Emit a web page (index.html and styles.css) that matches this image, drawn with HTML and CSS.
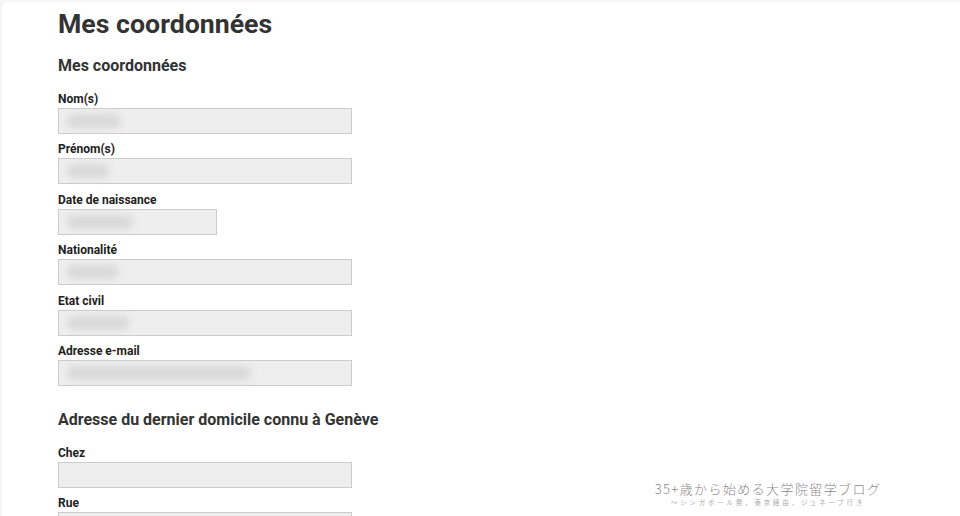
FILE: index.html
```html
<!DOCTYPE html>
<html lang="fr">
<head>
<meta charset="utf-8">
<title>Mes coordonnées</title>
<link rel="stylesheet" href="styles.css">
</head>
<body>
<main class="card">
  <h1 class="title">Mes coordonnées</h1>
  <section class="section">
    <h2 class="section-title">Mes coordonnées</h2>
    <div class="field">
      <label class="label">Nom(s)</label>
      <div class="input"><span class="blur" style="width:54px"></span></div>
    </div>
    <div class="field">
      <label class="label">Prénom(s)</label>
      <div class="input"><span class="blur" style="width:42px"></span></div>
    </div>
    <div class="field">
      <label class="label">Date de naissance</label>
      <div class="input input-short"><span class="blur" style="width:66px"></span></div>
    </div>
    <div class="field">
      <label class="label">Nationalité</label>
      <div class="input"><span class="blur" style="width:52px"></span></div>
    </div>
    <div class="field">
      <label class="label">Etat civil</label>
      <div class="input"><span class="blur" style="width:62px"></span></div>
    </div>
    <div class="field">
      <label class="label">Adresse e-mail</label>
      <div class="input"><span class="blur" style="width:184px"></span></div>
    </div>
  </section>
  <section class="section">
    <h2 class="section-title section-title-2">Adresse du dernier domicile connu à Genève</h2>
    <div class="field">
      <label class="label">Chez</label>
      <div class="input"></div>
    </div>
    <div class="field">
      <label class="label">Rue</label>
      <div class="input"></div>
    </div>
  </section>
</main>
<div class="watermark">
  <div class="wm-title">35+歳から始める大学院留学ブログ</div>
  <div class="wm-sub">〜シンガポール発、東京経由、ジュネーブ行き</div>
</div>
</body>
</html>
```
FILE: styles.css
```css
html, body {
  margin: 0;
  padding: 0;
  height: 100%;
  overflow: hidden;
}
body {
  background: #f6f6f6;
  font-family: Roboto, "Liberation Sans", Arial, sans-serif;
  color: #333;
}
.card {
  background: #fff;
  margin: 2px 0 0 2px;
  border-top-left-radius: 6px;
  padding: 5px 0 0 56px;
  min-height: 600px;
}
.title {
  margin: 0;
  font-size: 26.7px;
  line-height: 34px;
  font-weight: 700;
  color: #333;
}
.section-title {
  margin: 15px 0 0;
  font-size: 16px;
  line-height: 20px;
  font-weight: 700;
  color: #333;
}
.section-title-2 {
  margin-top: 23.6px;
}
.field {
  display: flex;
  flex-direction: column;
}
.section-title + .field {
  margin-top: 16px;
}
.field + .field {
  margin-top: 8.4px;
}
.label {
  font-size: 12px;
  line-height: 15px;
  font-weight: 700;
  color: #222;
  margin-bottom: 1px;
}
.input {
  box-sizing: border-box;
  width: 294px;
  height: 26px;
  background: #eeeeee;
  border: 1px solid #cccccc;
  display: flex;
  align-items: center;
  padding-left: 8px;
}
.input-short {
  width: 159px;
}
.blur {
  display: block;
  height: 14px;
  border-radius: 7px;
  background: #d9d9d9;
  filter: blur(3.5px);
}
.watermark {
  position: absolute;
  left: 640px;
  top: 479px;
  width: 256px;
  text-align: center;
  color: #8a8a8a;
  font-family: "Noto Sans CJK JP", sans-serif;
  white-space: nowrap;
}
.wm-title {
  font-size: 13px;
  line-height: 19px;
  letter-spacing: 1.4px;
  font-weight: 300;
}
.wm-sub {
  font-size: 6.5px;
  line-height: 9px;
  letter-spacing: 2.8px;
  color: #aaa;
}
```
